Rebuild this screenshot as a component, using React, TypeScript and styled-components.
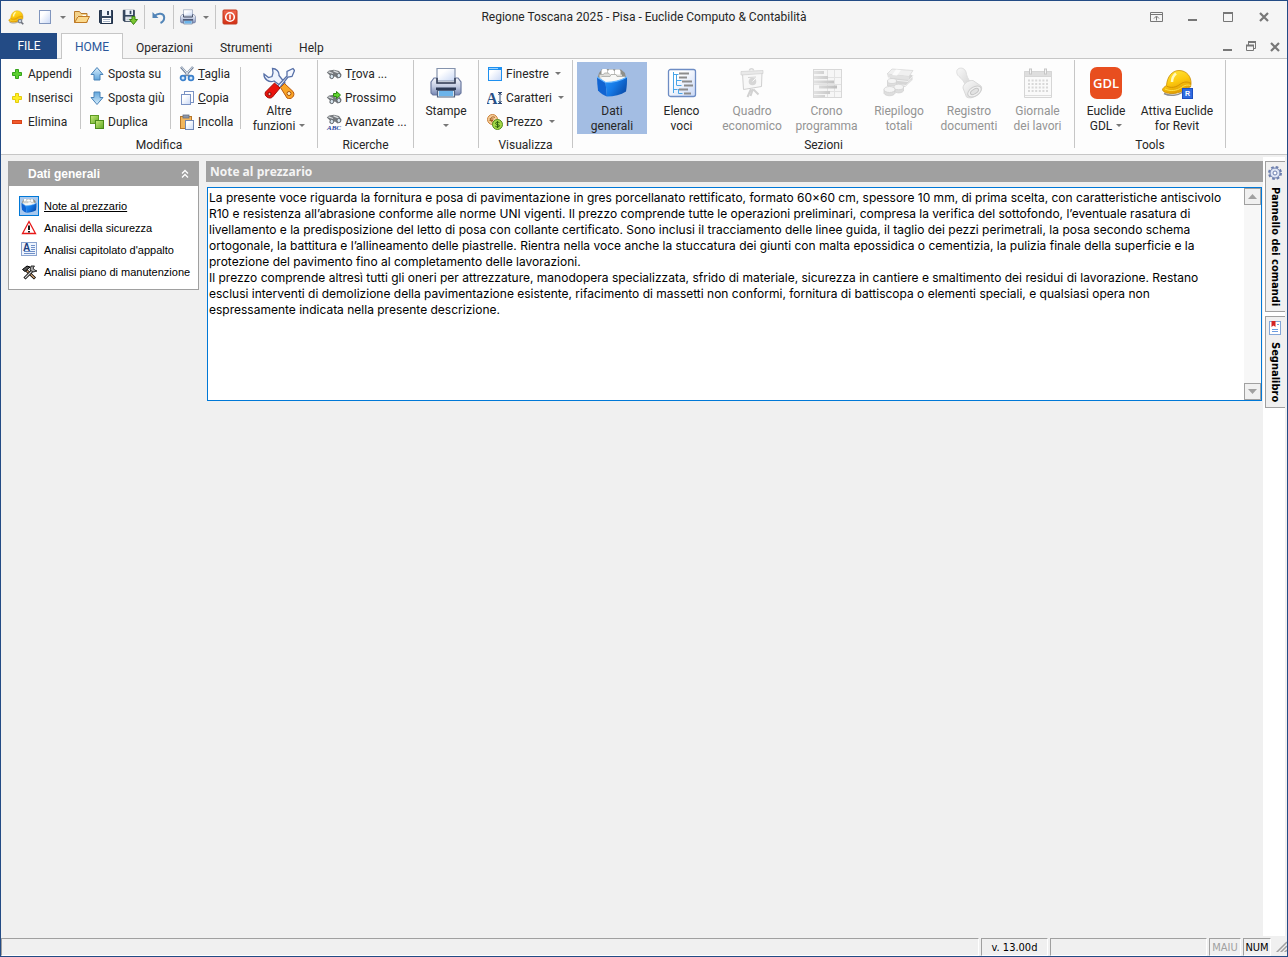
import React, { ReactNode } from 'react';
import styled, { createGlobalStyle, css } from 'styled-components';

const color = {
  navy: '#234b85',
  chrome: '#f5f5f5',
  ribbon: '#fdfdfd',
  line: '#c6c6c6',
  text: '#262626',
  disabled: '#949494',
  panel: '#f0f0f0',
  gray: '#a0a0a0',
  accent: '#0078d7',
  selected: '#a3bde3',
};

const uiFont = 'Roboto, "Open Sans", sans-serif';
const tahoma = '"DejaVu Sans Condensed", "DejaVu Sans", sans-serif';

const GlobalStyle = createGlobalStyle`
  *, *::before, *::after { box-sizing: border-box; }
  body { margin: 0; background: ${color.panel}; }
  svg { display: block; flex: none; }
  button { border: 0; padding: 0; margin: 0; background: none; font: inherit; color: inherit; }
`;

/* ---------- window frame ---------- */

const Window = styled.div`
  min-height: 100vh;
  display: flex;
  flex-direction: column;
  border: 1px solid ${color.navy};
  background: ${color.panel};
  font: 12px/15px ${uiFont};
  color: ${color.text};
`;

const TitleBar = styled.header`
  display: grid;
  grid-template-columns: 1fr auto 1fr;
  align-items: center;
  height: 32px;
  background: ${color.chrome};
`;

const QuickAccess = styled.div`
  display: flex;
  align-items: center;
  padding-left: 7px;
`;

const QuickButton = styled.button<{ $gap?: number }>`
  display: flex;
  align-items: center;
  margin-right: ${(p) => p.$gap ?? 8}px;
`;

const QuickDivider = styled.span`
  width: 1px;
  height: 24px;
  margin-right: 6px;
  background: ${color.line};
`;

const WindowTitle = styled.h1`
  margin: 0;
  font-size: 12px;
  font-weight: 400;
`;

const CaptionButtons = styled.div<{ $small?: boolean }>`
  display: flex;
  justify-content: flex-end;
  margin-left: auto;
  padding-right: ${(p) => (p.$small ? 0 : 5)}px;
  button {
    display: flex;
    align-items: center;
    justify-content: center;
    width: ${(p) => (p.$small ? 24 : 36)}px;
    height: 24px;
  }
`;

const TabRow = styled.nav`
  display: flex;
  align-items: flex-end;
  height: 26px;
  background: ${color.chrome};
  box-shadow: inset 0 -1px ${color.line};
`;

const FileTab = styled.button`
  width: 56px;
  height: 26px;
  margin-right: 4px;
  background: ${color.navy};
  color: #fff;
`;

const Tab = styled.button<{ $active?: boolean }>`
  height: 26px;
  padding: 3px 14px 0 13px;
  border: solid transparent;
  border-width: 1px 0 0;
  ${(p) =>
    p.$active &&
    css`
      width: 62px;
      padding: 2px 0 0;
      border: solid ${color.line};
      border-width: 1px 1px 0;
      background: ${color.ribbon};
      color: #2b579a;
    `}
`;

/* ---------- ribbon ---------- */

const RibbonBar = styled.div`
  display: flex;
  height: 96px;
  background: ${color.ribbon};
  border-bottom: 1px solid ${color.line};
`;

const GroupBox = styled.section`
  display: flex;
  flex-direction: column;
  padding-top: 3px;
`;

const GroupContent = styled.div<{ $pad?: number }>`
  display: flex;
  height: 72px;
  padding: 0 ${(p) => p.$pad ?? 0}px;
`;

const GroupLabel = styled.h2`
  margin: 3px 0 0;
  font-size: 12px;
  font-weight: 400;
  line-height: 16px;
  text-align: center;
`;

const GroupDivider = styled.span`
  width: 1px;
  height: 88px;
  margin-top: 1px;
  background: ${color.line};
`;

const ColumnDivider = styled.span`
  width: 1px;
  margin: 5px 0;
  background: ${color.line};
`;

const Column = styled.div<{ $width: number }>`
  display: flex;
  flex-direction: column;
  width: ${(p) => p.$width}px;
  padding-left: 8px;
`;

const SmallButton = styled.button`
  display: flex;
  align-items: center;
  gap: 3px;
  height: 24px;
  white-space: nowrap;
`;

const IconSlot = styled.span`
  display: flex;
  align-items: center;
  justify-content: center;
  width: 16px;
  height: 16px;
`;

const BigButton = styled.button<{ $width: number; $selected?: boolean }>`
  display: flex;
  flex-direction: column;
  align-items: center;
  gap: 5px;
  width: ${(p) => p.$width}px;
  height: 72px;
  padding-top: 5px;
  white-space: nowrap;
  background: ${(p) => (p.$selected ? color.selected : 'none')};
  &:disabled {
    color: ${color.disabled};
  }
`;

const BigLabel = styled.span`
  text-align: center;
`;

const Arrow = styled.span<{ $gap?: number }>`
  display: inline-block;
  margin-left: ${(p) => p.$gap ?? 4}px;
  vertical-align: 3px;
  border: solid transparent;
  border-width: 3px 3px 0;
  border-top-color: #777;
`;

const ArrowBelow = styled(Arrow)`
  margin: 0 auto;
`;

/* ---------- workspace ---------- */

const Workspace = styled.main`
  flex: 1;
  display: flex;
  align-items: stretch;
  padding: 0 2px 0 7px;
`;

const Sidebar = styled.aside`
  width: 191px;
  margin: 6px 7px 0 0;
  flex: none;
  align-self: flex-start;
  border: 1px solid ${color.gray};
  background: #fff;
`;

const SidebarHeader = styled.header`
  display: flex;
  align-items: center;
  justify-content: space-between;
  height: 24px;
  padding: 0 8px 0 19px;
  background: ${color.gray};
  color: #fff;
  font: bold 12px/16px "Liberation Sans", sans-serif;
`;

const SidebarList = styled.ul`
  margin: 0;
  padding: 9px 0 6px 9px;
  list-style: none;
`;

const SidebarItem = styled.li`
  display: flex;
  align-items: center;
  gap: 4px;
  height: 22px;
`;

const SidebarIcon = styled.span<{ $selected?: boolean }>`
  display: flex;
  align-items: center;
  justify-content: center;
  width: 22px;
  height: 20px;
  ${(p) =>
    p.$selected &&
    css`
      width: 20px;
      margin: 0 1px;
      border: 1px solid ${color.accent};
      background: #a9c9ee;
    `}
`;

const SidebarLink = styled.a<{ $selected?: boolean }>`
  color: #000;
  font: 11px/14px "Liberation Sans", sans-serif;
  white-space: nowrap;
  text-decoration: ${(p) => (p.$selected ? 'underline' : 'none')};
`;

const NotesPane = styled.section`
  flex: 1;
  min-width: 0;
  margin-top: 6px;
`;

const NotesTitle = styled.h2`
  height: 21px;
  margin: 0 0 5px;
  padding-left: 4px;
  background: ${color.gray};
  color: #f4f4f4;
  font: bold 12px/21px "Open Sans", sans-serif;
`;

const NotesBox = styled.div`
  display: flex;
  height: 214px;
  margin: 0 1px;
  border: 1px solid ${color.accent};
  background: #fff;
`;

const NotesText = styled.textarea`
  flex: 1;
  min-width: 0;
  padding: 2px 0 0 1px;
  border: 0;
  outline: 0;
  resize: none;
  overflow: hidden;
  background: #fff;
  color: #000;
  font: 12px/16px Inter, "Noto Sans", sans-serif;
  white-space: pre-wrap;
`;

const ScrollTrack = styled.div`
  display: flex;
  flex-direction: column;
  justify-content: space-between;
  width: 17px;
  background: #f7f7f7;
`;

const ScrollButton = styled.button`
  display: flex;
  align-items: center;
  justify-content: center;
  width: 17px;
  height: 17px;
  border: 1px solid ${color.gray};
  background: ${color.panel};
`;

const DockStrip = styled.div`
  display: flex;
  flex-direction: column;
  gap: 4px;
  width: 22px;
  margin-top: 2px;
  padding: 4px 0 0 2px;
  background: #fff;
`;

const DockTab = styled.button`
  display: flex;
  flex-direction: column;
  align-items: center;
  gap: 6px;
  padding: 3px 2px 5px 0;
  border: solid ${color.gray};
  border-width: 1px 0 1px 1px;
  background: ${color.panel};
  color: #000;
`;

const DockLabel = styled.span`
  font: bold 11px/16px ${tahoma};
  writing-mode: vertical-rl;
`;

/* ---------- status bar ---------- */

const StatusBar = styled.footer`
  display: flex;
  align-items: stretch;
  gap: 2px;
  height: 20px;
  padding: 2px 0 0;
  font: 11px/18px ${tahoma};
  color: #000;
`;

const StatusCell = styled.span<{ $width?: number; $muted?: boolean }>`
  ${(p) => (p.$width ? `width: ${p.$width}px;` : 'flex: 1;')}
  border: 1px solid;
  border-color: ${color.gray} #fff #fff ${color.gray};
  text-align: center;
  white-space: nowrap;
  color: ${(p) => (p.$muted ? color.gray : '#000')};
`;

/* ---------- icons ---------- */

const Gradients = () => (
  <svg width="0" height="0" aria-hidden="true">
    <defs>
      <linearGradient id="yellow" x1="0.2" y1="0" x2="0.6" y2="1">
        <stop offset="0" stopColor="#ffe63c" />
        <stop offset="0.5" stopColor="#fdc90f" />
        <stop offset="1" stopColor="#dd9800" />
      </linearGradient>
      <linearGradient id="blueArrow" x1="0" y1="0" x2="0" y2="1">
        <stop offset="0" stopColor="#d8eefc" />
        <stop offset="1" stopColor="#5fa5dc" />
      </linearGradient>
      <linearGradient id="page" x1="0" y1="0" x2="1" y2="1">
        <stop offset="0.3" stopColor="#fff" />
        <stop offset="1" stopColor="#c9d8f5" />
      </linearGradient>
      <linearGradient id="green" x1="0" y1="0" x2="1" y2="1">
        <stop offset="0" stopColor="#c9ea7c" />
        <stop offset="1" stopColor="#5fa822" />
      </linearGradient>
      <linearGradient id="blueBox" x1="0" y1="0" x2="1" y2="0.6">
        <stop offset="0" stopColor="#2b96f8" />
        <stop offset="0.5" stopColor="#1579e6" />
        <stop offset="1" stopColor="#0a4fae" />
      </linearGradient>
      <linearGradient id="printer" x1="0" y1="0" x2="0" y2="1">
        <stop offset="0" stopColor="#f4f6fb" />
        <stop offset="0.5" stopColor="#c3cce2" />
        <stop offset="1" stopColor="#7586b3" />
      </linearGradient>
      <linearGradient id="paleGray" x1="0" y1="0" x2="1" y2="1">
        <stop offset="0" stopColor="#f9f9f9" />
        <stop offset="1" stopColor="#d4d4d4" />
      </linearGradient>
      <linearGradient id="bar" x1="0" y1="0" x2="1" y2="0">
        <stop offset="0" stopColor="#e2e2e2" />
        <stop offset="1" stopColor="#bdbdbd" />
      </linearGradient>
      <linearGradient id="red" x1="0" y1="0" x2="0" y2="1">
        <stop offset="0" stopColor="#f0674e" />
        <stop offset="1" stopColor="#d32f12" />
      </linearGradient>
    </defs>
  </svg>
);

type SvgProps = { size?: number; box?: string; children: ReactNode };
const Svg = ({ size = 16, box, children }: SvgProps) => (
  <svg width={size} height={size} viewBox={box ?? `0 0 ${size} ${size}`} fill="none" aria-hidden="true">
    {children}
  </svg>
);

const HelmetShape = () => (
  <>
    <path d="M3 26.500c6 3 14 2 19-1.500l7-4" stroke="#8f8f8f" strokeWidth="1.500" />
    <path d="M1.500 23C1.500 21 4 19.500 5.500 18.500C6 10 11 3.500 18 3.500C26 3.500 30.500 10 30 17L29.500 20C28 20 25 21 22 23.500C16 28 3 27.500 1.500 23Z" fill="url(#yellow)" stroke="#c98d05" strokeWidth=".8" />
    <path d="M5.500 19C10 21.500 15 20.500 19.500 17C23 14.500 27 14.500 30 16.500" stroke="#d39300" strokeWidth="1" />
    <path d="M4 22C9 24.500 15.500 24 20.500 20.500C23.500 18 27 17.500 29.500 18.500" stroke="#ffe04a" strokeWidth="1" />
    <path d="M15 6.500C12 9 11 12 11 15" stroke="#fffac0" strokeWidth="2.500" />
  </>
);

const AppIcon = () => (
  <Svg box="0 0 32 32">
    <HelmetShape />
    <circle cx="24" cy="24" r="3.500" fill="#d4dbe6" stroke="#7d8795" strokeWidth="2.500" />
    <path d="M26.500 26.500l4 4" stroke="#6b6f78" strokeWidth="3.500" />
  </Svg>
);

const NewIcon = () => (
  <Svg>
    <rect x="2.500" y="1.500" width="11" height="13" fill="url(#page)" stroke="#8095bd" />
  </Svg>
);

const OpenIcon = () => (
  <Svg>
    <path d="M.5 13.500v-11h5l1.500 2h6v9z" fill="#f3d28a" stroke="#b8792a" />
    <path d="M3 7h5l1-1h3v2H3z" fill="#fff" />
    <path d="M.7 13.500L4 7.500h11.500l-3 6z" fill="#fbd98c" stroke="#c07a24" />
  </Svg>
);

const DiskShape = () => (
  <>
    <path d="M1.500 1.500h13v13h-12l-1-1z" fill="#33465f" stroke="#22324a" />
    <rect x="4" y="1" width="9" height="6" fill="#eef3fa" />
    <rect x="9" y="2" width="2" height="4" fill="#33465f" />
    <rect x="4" y="9" width="9" height="5" fill="#fff" />
    <path d="M5 10.500h7M5 12.500h7" stroke="#a9b6c9" />
  </>
);

const SaveIcon = () => (
  <Svg>
    <DiskShape />
  </Svg>
);

const SaveAsIcon = () => (
  <Svg>
    <g transform="scale(.85)">
      <DiskShape />
    </g>
    <path d="M10 7.500h3v3h2.500L11.500 15.500 7.500 10.500H10z" fill="#7cc733" stroke="#3b8512" />
  </Svg>
);

const UndoIcon = () => (
  <Svg>
    <path d="M3.500 7C7 3.500 13 4 13.200 8.500c0 2.500-1.500 4.500-3.700 5.500" stroke="#5285b8" strokeWidth="2" />
    <path d="M1.500 3v6h6z" fill="#5285b8" />
  </Svg>
);

const PrintIcon = ({ size = 16 }: { size?: number }) => (
  <Svg size={size} box="0 0 32 32">
    <path d="M7 1.500h18V14H7z" fill="url(#page)" stroke="#8593ad" strokeWidth="1.200" />
    <path d="M1 15l3-4h3v5h18v-5h3l3 4v11l-2 2H3l-2-2z" fill="url(#printer)" stroke="#6c7aa0" strokeWidth="1.200" />
    <path d="M7 11v5h18v-5" stroke="#3a4358" strokeWidth="1.500" />
    <path d="M6 20.500h20V23H6z" fill="#2d3a55" />
    <path d="M7.500 23.500h17v6.500h-17z" fill="#dfeefa" stroke="#51627f" strokeWidth="1.200" />
    <path d="M9 24h14v5H9z" fill="#6cb4ea" />
  </Svg>
);

const PowerIcon = () => (
  <Svg>
    <rect x="1" y="1" width="14" height="14" rx="1" fill="url(#red)" stroke="#c23a20" />
    <circle cx="8" cy="8" r="4.300" stroke="#fff" strokeWidth="1.600" />
    <path d="M8 5.500v5" stroke="#fff" strokeWidth="1.600" />
  </Svg>
);

const PlusIcon = ({ fill, edge }: { fill: string; edge: string }) => (
  <Svg>
    <path d="M6.500 3.500h3v3h3v3h-3v3h-3v-3h-3v-3h3z" fill={fill} stroke={edge} />
  </Svg>
);

const MinusIcon = () => (
  <Svg>
    <rect x="3.500" y="6.500" width="9" height="3" fill="#f15a2c" stroke="#d84419" />
  </Svg>
);

const ArrowIcon = ({ down }: { down?: boolean }) => (
  <Svg>
    <path
      d="M8 1.500l6 7h-3v5.500H5V8.500H2z"
      fill="url(#blueArrow)"
      stroke="#4a83b8"
      transform={down ? 'rotate(180 8 8)' : undefined}
    />
  </Svg>
);

const DuplicateIcon = () => (
  <Svg>
    <rect x="1.500" y="1.500" width="8" height="8" fill="url(#green)" stroke="#5d9a22" />
    <rect x="6.500" y="6.500" width="8" height="8" fill="url(#green)" stroke="#4b8a1a" />
  </Svg>
);

const CutIcon = () => (
  <Svg>
    <path d="M2 1l8 9M14 1L6 10" stroke="#75859c" strokeWidth="2.600" />
    <path d="M2.500 1l7 8M13.500 1l-7 8" stroke="#e3eaf4" strokeWidth="1" />
    <circle cx="4" cy="12" r="2.400" fill="#d6e9fb" stroke="#3a80cc" strokeWidth="1.800" />
    <circle cx="12" cy="12" r="2.400" fill="#d6e9fb" stroke="#3a80cc" strokeWidth="1.800" />
  </Svg>
);

const CopyIcon = () => (
  <Svg>
    <rect x="5.500" y="1.500" width="9" height="11" fill="#fff" stroke="#7b93c4" />
    <rect x="2.500" y="4.500" width="9" height="10" fill="url(#page)" stroke="#7b93c4" />
  </Svg>
);

const PasteIcon = () => (
  <Svg>
    <rect x="1.500" y="2.500" width="11" height="12" fill="#f2b65c" stroke="#b8772a" />
    <rect x="4" y="1" width="6" height="3" fill="#8d97a8" stroke="#666f80" strokeWidth=".8" />
    <rect x="6.500" y="6.500" width="8" height="9" fill="url(#page)" stroke="#6f86b5" />
  </Svg>
);

const ToolsIcon = () => (
  <Svg size={32}>
    <path d="M9.500 1.500C13 1.500 16.500 4.500 16 8.500L22 16l-3.500 3.500L11 14C6 16 .5 12 1 7L5.500 10.500 9 9.500 10 6z" fill="#eef3fd" stroke="#5871a8" strokeWidth="1.300" />
    <path d="M14 19.500L24 9V4.500l6-3 1.500 2-2.500 6-4 .5L16.500 21z" fill="#f5f8ff" stroke="#5871a8" strokeWidth="1.300" />
    <path d="M11.500 16l5.500 5-7.500 9c-3 3-9-1-7-5z" fill="#ea130c" stroke="#a30c06" />
    <path d="M17.500 20.500l4-4 8.500 8c3 4-2 9-6 6.500z" fill="#f9a526" stroke="#b9580e" />
    <circle cx="6.500" cy="27" r="1.600" fill="#f7b4ae" stroke="#7c0c06" />
    <circle cx="26" cy="26.500" r="2" fill="#fff2d0" stroke="#a5500c" />
  </Svg>
);

const BinocularShape = () => (
  <>
    <path d="M.8 6.500L3 4.500l5-.8 5 1.300 2.500 3.500-.5 2.500-3.500 1.500-2.500-2-1.500.5L6.500 13 3.500 12 4 9.500z" fill="#75797d" />
    <path d="M2.500 5.800l4.500 1.700M7.500 4.800l5 2" stroke="#d9dcde" strokeWidth="1.300" />
    <ellipse cx="5.800" cy="10.500" rx="1.800" ry="2.200" fill="#d5e4ee" stroke="#55595e" strokeWidth=".8" />
    <ellipse cx="12.800" cy="9.500" rx="1.800" ry="2.200" fill="#d5e4ee" stroke="#55595e" strokeWidth=".8" />
  </>
);

const FindIcon = () => (
  <Svg>
    <BinocularShape />
  </Svg>
);

const FindNextIcon = () => (
  <Svg>
    <g transform="translate(0 1)">
      <BinocularShape />
    </g>
    <path d="M7.500 3.500h3V1.500l4 3.500-4 3.500V6.500h-3z" fill="#5fd42d" stroke="#2e8a12" />
  </Svg>
);

const FindAdvancedIcon = () => (
  <Svg>
    <g transform="translate(0 -3)">
      <BinocularShape />
    </g>
    <text x="8" y="15.500" textAnchor="middle" fontFamily="Liberation Serif, serif" fontSize="7" fontStyle="italic" fontWeight="bold" fill="#2847a0">
      ABC
    </text>
  </Svg>
);

const WindowIcon = () => (
  <Svg>
    <rect x="1.500" y="1.500" width="13" height="13" fill="url(#page)" stroke="#1e90f0" />
    <path d="M1 1h14v3H1z" fill="#1e90f0" />
    <path d="M2 2.500h9" stroke="#9bd2fc" />
  </Svg>
);

const FontIcon = () => (
  <Svg>
    <text x="-1" y="14" fontFamily="Liberation Serif, serif" fontSize="16" fontWeight="bold" fill="#274f86">
      A
    </text>
    <path d="M11 2.500h4M11 13.500h4M13 3v10M11.500 5L13 3l1.500 2M11.500 11l1.500 2 1.500-2" stroke="#2f4a74" />
  </Svg>
);

const PriceIcon = () => (
  <Svg>
    <circle cx="5.500" cy="5.500" r="5" fill="#f7cf9b" stroke="#c9803a" />
    <path d="M8 3.500C5.500 2 3.500 3.500 3.500 5.500S5.500 9 8 7.500M2.500 5h4M2.500 6.500h3.500" stroke="#a35c1d" />
    <circle cx="10.500" cy="10.500" r="5" fill="#a4d848" stroke="#558b1c" />
    <path d="M12.500 8.700c-1.500-1-4-.6-4 .7 0 1.600 4 .8 4 2.400 0 1.300-2.800 1.500-4.200.4M10.500 7v7" stroke="#2f6310" />
  </Svg>
);

const FoldersIcon = ({ size = 32 }: { size?: number }) => (
  <Svg size={size} box="0 0 32 32">
    <path d="M1.500 11L3 6l3-4 19 .5 4 3.500 1 5-20 5z" fill="#8e8f8a" />
    <path d="M5.500 9V3.500L6.500 2h4l1 1.500V9zM12 9V4l1-1.500h4L18 4v5zM18.500 9V4l1-1.500h4l1 1.500v5z" fill="#fff" />
    <path d="M3.500 13V7.500h4l1-1.500h4l1 1.500h12.500V13z" fill="#dcdcd8" />
    <path d="M5.500 15V9.500H14l1-2h5l1 2h8V13l-17 4z" fill="#f8f8f6" />
    <path d="M3.500 7.500h4l1-1.500h4l1 1.500M5.500 9.500H14l1-2h5l1 2h8" stroke="#a7a8a4" strokeWidth=".8" />
    <path d="M1 10l8.500 5.500 1.500 14c-3-1-6.500-3-9-6C1.500 19 1 14.500 1 10z" fill="#1164d2" />
    <path d="M9.500 15.500C17 15.500 25 13.500 31 10c.2 5-.2 10-1 14.500-5 3.200-12 5-19 5z" fill="url(#blueBox)" />
    <path d="M1 10l8.500 5.500C17 15.500 25 13.500 31 10" stroke="#62b4ff" strokeWidth="1.200" />
  </Svg>
);

const ListIcon = () => (
  <Svg size={32}>
    <rect x="2.500" y="2.500" width="27" height="27" rx="2" fill="url(#page)" stroke="#6d8cc4" strokeWidth="1.300" />
    <path d="M7.500 5v21M7.500 7.500h5M10.500 8v10M10.500 13.500h5M10.500 18.500h5M7.500 22.500h4M12.500 22v4.500h4" stroke="#49a5e8" />
    <path d="M13 6.500h10M13 10.500h8M16 14.500h10M18 18.500h9M13 22.500h9M18 26.500h7" stroke="#8c8c8c" strokeWidth="2" />
  </Svg>
);

const BoardIcon = () => (
  <Svg size={32}>
    <path d="M13.500 3.500c0-2.500 4-2.500 4 0" stroke="#d8d8d8" strokeWidth="1.500" />
    <path d="M6.500 6.500L26 5l-.5 14.500-18 3z" fill="#f8f8f8" stroke="#d0d0d0" />
    <path d="M5 4.500L27 3.500v3L5 8z" fill="#e9e9e9" stroke="#d0d0d0" strokeWidth=".7" />
    <path d="M12 10.500l8-.5" stroke="#d4d4d4" />
    <circle cx="16.500" cy="14.500" r="3.800" fill="#d6d6d6" />
    <path d="M16.500 14.500l3-3" stroke="#f8f8f8" />
    <path d="M15 22l-3.500 8M17 22l-2.500 7M17.500 22.500l5 5" stroke="#d2d2d2" strokeWidth="2" />
  </Svg>
);

const GanttIcon = () => (
  <Svg size={32}>
    <rect x="2.500" y="2.500" width="28" height="28" fill="#f6f6f6" stroke="#d8d8d8" />
    <path d="M16.500 3v27M23.500 3v27M3 10.500h27M3 17.500h27M3 24.500h27" stroke="#e2e2e2" />
    <path d="M3 4h10v3H3zM3 9h14v3H3zM3 13.500h20v3H3zM8 18.500h18v3H8zM3 24h16v3H3zM3 28h11v2H3z" fill="url(#bar)" />
  </Svg>
);

const MoneyIcon = () => (
  <Svg size={32}>
    <path d="M7 5l22.500 3v5L22 20l-11-3-4-6z" fill="#d6d6d6" />
    <path d="M4 7l5-5 21 1.500-4 6z" fill="#f0f0f0" stroke="#d8d8d8" strokeWidth=".8" />
    <path d="M4 7l22 2.500V13L5 10.500z" fill="#e2e2e2" />
    <path d="M13 2.500l5 .5-4 5.500-5-.5z" fill="#fbfbfb" />
    <path d="M11 13l14 1.500 5.500-6M12 17l11 1.500 6-6" stroke="#f2f2f2" />
    <path d="M4.500 14v5h9v-5M1 22.500v4c2 3 9 3 11 0v-4M11 20v4c2 2.500 7.500 2.500 9.500 0v-4" fill="#dedede" stroke="#d2d2d2" strokeWidth=".8" />
    <ellipse cx="9" cy="14" rx="4.500" ry="2.500" fill="#f4f4f4" stroke="#d2d2d2" strokeWidth=".8" />
    <ellipse cx="15.700" cy="20" rx="4.800" ry="2.700" fill="#f4f4f4" stroke="#d2d2d2" strokeWidth=".8" />
    <ellipse cx="6.500" cy="22.500" rx="5.500" ry="3" fill="#f4f4f4" stroke="#d2d2d2" strokeWidth=".8" />
  </Svg>
);

const StampIcon = () => (
  <Svg size={32}>
    <path d="M5 2c3-2 7-.5 8 3 .7 3.500 1.500 7 5 10l-5.500 4C11.500 15 9 12 6 9.500 3.500 7.500 3 3.500 5 2z" fill="url(#paleGray)" stroke="#dedede" />
    <path d="M10 21c0-4 5-8 10-7.500l8 5.500c2 3-1 7.500-5 10-3.500 2-7 2.500-9.500 1z" fill="url(#paleGray)" stroke="#dadada" />
    <ellipse cx="21.500" cy="24.500" rx="7.500" ry="4.500" transform="rotate(-32 21.500 24.500)" fill="#f0f0f0" stroke="#cccccc" />
    <ellipse cx="21.500" cy="24.500" rx="4.500" ry="2.200" transform="rotate(-32 21.500 24.500)" fill="#e2e2e2" stroke="#c4c4c4" />
  </Svg>
);

const CalendarIcon = () => (
  <Svg size={32}>
    <path d="M2.500 4.500h27v26h-27z" fill="#fafafa" stroke="#d6d6d6" />
    <path d="M2.500 4.500h27v5h-27z" fill="#dedede" stroke="#d6d6d6" />
    <path d="M3 28.500h26" stroke="#dedede" />
    <path d="M8.500 1.500v6M23.500 1.500v6" stroke="#c6c6c6" strokeWidth="3" />
    <path d="M8.500 2.500v4M23.500 2.500v4" stroke="#f4f4f4" />
    <path d="M6 13.500h20M6 17h20M6 20.500h20M6 24h20" stroke="#d8d8d8" strokeWidth="2" strokeDasharray="2 1.600" />
  </Svg>
);

const GdlIcon = () => (
  <Svg size={32}>
    <rect width="32" height="32" rx="7" fill="#e84e1f" />
    <text x="16" y="21" textAnchor="middle" fontFamily="Open Sans, sans-serif" fontSize="13" fontWeight="600" fill="#fff">
      GDL
    </text>
  </Svg>
);

const RevitIcon = () => (
  <Svg size={32}>
    <HelmetShape />
    <rect x="21.500" y="21.500" width="10" height="10" fill="#2f6be0" stroke="#1c4fc0" />
    <text x="26.500" y="29" textAnchor="middle" fontFamily="Liberation Sans, sans-serif" fontSize="7" fontWeight="bold" fill="#fff">
      R
    </text>
  </Svg>
);

const WarningIcon = () => (
  <Svg>
    <path d="M8 1.500L14.500 13.500h-13z" fill="#fff" stroke="#e81818" strokeWidth="1.300" />
    <path d="M8 5.500v4.500M8 11v1.500" stroke="#000" strokeWidth="1.800" />
  </Svg>
);

const SpecIcon = () => (
  <Svg>
    <rect x=".5" y=".5" width="15" height="13" fill="#eef4fd" stroke="#8aa3cf" />
    <path d="M10 3.500h4M10 5.500h4M10 7.500h4M3 9.500h11M3 11.500h11" stroke="#6f8fc8" />
    <text x="2" y="8.500" fontFamily="Liberation Sans, sans-serif" fontSize="10" fontWeight="bold" fill="#1d3f80">
      A
    </text>
  </Svg>
);

const HammerIcon = () => (
  <Svg>
    <path d="M5 6l9 8.500" stroke="#000" strokeWidth="3" />
    <path d="M5.500 6.500l8 7.500" stroke="#d8a878" strokeWidth="1.200" />
    <path d="M12 6l-8.500 8.500" stroke="#000" strokeWidth="3" />
    <path d="M11.500 6.500L4 14" stroke="#d4d4d4" strokeWidth="1.200" />
    <path d="M1.500 5.500L6 2l3 1-5 4.500z" fill="#555" stroke="#000" />
    <path d="M10 2l-1 4 3 2 4-1-2.500-1L12 4l1.500-2z" fill="#aaa" stroke="#000" strokeWidth=".8" />
  </Svg>
);

const GearIcon = () => (
  <Svg>
    <circle cx="8" cy="8" r="6" stroke="#6d7fae" strokeWidth="2" strokeDasharray="2.700 2.012" />
    <circle cx="8" cy="8" r="5" fill="#dfe6f5" stroke="#6d7fae" />
    <circle cx="8" cy="8" r="2" fill="#fff" stroke="#6d7fae" />
  </Svg>
);

const BookmarkIcon = () => (
  <Svg>
    <rect x="2.500" y="1.500" width="11" height="13" fill="#fff" stroke="#84a7d8" />
    <path d="M4.500 1v6l2-1.500 2 1.500V1z" fill="#d42424" />
    <path d="M10 4.500h2M5 9.500h6M5 11.500h6" stroke="#6b9be0" />
  </Svg>
);

const RibbonToggleIcon = () => (
  <Svg>
    <path d="M2.500 3.500h12v9h-12zM2.500 5.500h12M8.500 11.500V7.500M6 9.500l2.500-2.500 2.500 2.500" stroke="#777" />
  </Svg>
);
const MinimizeIcon = () => (
  <Svg>
    <path d="M4 11h9" stroke="#777" strokeWidth="2" />
  </Svg>
);
const MaximizeIcon = () => (
  <Svg>
    <path d="M3.500 3.500h9v9h-9z" stroke="#777" />
    <path d="M3 4h10" stroke="#777" strokeWidth="2" />
  </Svg>
);
const RestoreIcon = () => (
  <Svg>
    <path d="M5.500 6V3.500h7v6H10" stroke="#777" />
    <path d="M5 3h8M3 6.500h8" stroke="#777" strokeWidth="2" />
    <path d="M3.500 6.500h7v5h-7z" stroke="#777" />
  </Svg>
);
const CloseIcon = () => (
  <Svg>
    <path d="M4 4l8 8M12 4l-8 8" stroke="#777" strokeWidth="2.200" />
  </Svg>
);
const CollapseIcon = () => (
  <Svg size={10}>
    <path d="M2 4.500l3-3 3 3M2 8.500l3-3 3 3" stroke="#fff" strokeWidth="1.300" />
  </Svg>
);
const ScrollArrow = ({ down }: { down?: boolean }) => (
  <Svg size={9}>
    <path d={down ? 'M0 2h9L4.500 7z' : 'M0 7h9L4.500 2z'} fill="#a0a0a0" />
  </Svg>
);
const SizeGrip = () => (
  <Svg size={14}>
    <path d="M2 16L14 4M6 16l8-8M10 16l4-4" stroke="#a0a0a0" strokeWidth="1.500" />
  </Svg>
);

/* ---------- composed parts ---------- */

type GroupProps = { label?: string; pad?: number; children: ReactNode };
const Group = ({ label, pad, children }: GroupProps) => (
  <>
    <GroupBox>
      <GroupContent $pad={pad}>{children}</GroupContent>
      {label && <GroupLabel>{label}</GroupLabel>}
    </GroupBox>
    <GroupDivider />
  </>
);

type SmallProps = { icon: ReactNode; menu?: boolean; children: ReactNode };
const Small = ({ icon, menu, children }: SmallProps) => (
  <SmallButton>
    <IconSlot>{icon}</IconSlot>
    <span>
      {children}
      {menu && <Arrow $gap={6} />}
    </span>
  </SmallButton>
);

type BigProps = { icon: ReactNode; width: number; selected?: boolean; disabled?: boolean; children: ReactNode };
const Big = ({ icon, width, selected, disabled, children }: BigProps) => (
  <BigButton $width={width} $selected={selected} disabled={disabled}>
    {icon}
    <BigLabel>{children}</BigLabel>
  </BigButton>
);

const notes = `La presente voce riguarda la fornitura e posa di pavimentazione in gres porcellanato rettificato, formato 60×60 cm, spessore 10 mm, di prima scelta, con caratteristiche antiscivolo
R10 e resistenza all’abrasione conforme alle norme UNI vigenti. Il prezzo comprende tutte le operazioni preliminari, compresa la verifica del sottofondo, l’eventuale rasatura di
livellamento e la predisposizione del letto di posa con collante certificato. Sono inclusi il tracciamento delle linee guida, il taglio dei pezzi perimetrali, la posa secondo schema
ortogonale, la battitura e l’allineamento delle piastrelle. Rientra nella voce anche la stuccatura dei giunti con malta epossidica o cementizia, la pulizia finale della superficie e la
protezione del pavimento fino al completamento delle lavorazioni.
Il prezzo comprende altresì tutti gli oneri per attrezzature, manodopera specializzata, sfrido di materiale, sicurezza in cantiere e smaltimento dei residui di lavorazione. Restano
esclusi interventi di demolizione della pavimentazione esistente, rifacimento di massetti non conformi, fornitura di battiscopa o elementi speciali, e qualsiasi opera non
espressamente indicata nella presente descrizione.`;

const sections = [
  { name: 'Analisi della sicurezza', icon: <WarningIcon /> },
  { name: "Analisi capitolato d'appalto", icon: <SpecIcon /> },
  { name: 'Analisi piano di manutenzione', icon: <HammerIcon /> },
];

export default function App() {
  return (
    <Window>
      <GlobalStyle />
      <Gradients />
      <TitleBar>
        <QuickAccess>
          <QuickButton $gap={13} aria-label="Euclide"><AppIcon /></QuickButton>
          <QuickButton $gap={3} aria-label="Nuovo"><NewIcon /></QuickButton>
          <QuickButton aria-label="Altri modelli"><Arrow /></QuickButton>
          <QuickButton aria-label="Apri"><OpenIcon /></QuickButton>
          <QuickButton aria-label="Salva"><SaveIcon /></QuickButton>
          <QuickButton $gap={6} aria-label="Salva con nome"><SaveAsIcon /></QuickButton>
          <QuickDivider />
          <QuickButton $gap={6} aria-label="Annulla"><UndoIcon /></QuickButton>
          <QuickDivider />
          <QuickButton $gap={3} aria-label="Stampa"><PrintIcon /></QuickButton>
          <QuickButton $gap={6} aria-label="Opzioni di stampa"><Arrow /></QuickButton>
          <QuickDivider />
          <QuickButton aria-label="Esci"><PowerIcon /></QuickButton>
        </QuickAccess>
        <WindowTitle>Regione Toscana 2025 - Pisa - Euclide Computo &amp; Contabilità</WindowTitle>
        <CaptionButtons>
          <button aria-label="Riduci barra multifunzione"><RibbonToggleIcon /></button>
          <button aria-label="Riduci a icona"><MinimizeIcon /></button>
          <button aria-label="Ingrandisci"><MaximizeIcon /></button>
          <button aria-label="Chiudi"><CloseIcon /></button>
        </CaptionButtons>
      </TitleBar>

      <TabRow>
        <FileTab>FILE</FileTab>
        <Tab $active>HOME</Tab>
        <Tab>Operazioni</Tab>
        <Tab>Strumenti</Tab>
        <Tab>Help</Tab>
        <CaptionButtons $small>
          <button aria-label="Riduci documento"><MinimizeIcon /></button>
          <button aria-label="Ripristina documento"><RestoreIcon /></button>
          <button aria-label="Chiudi documento"><CloseIcon /></button>
        </CaptionButtons>
      </TabRow>

      <RibbonBar>
        <Group label="Modifica">
          <Column $width={79}>
            <Small icon={<PlusIcon fill="#5cd030" edge="#35a31a" />}>Appendi</Small>
            <Small icon={<PlusIcon fill="#ffee22" edge="#e3cb10" />}>Inserisci</Small>
            <Small icon={<MinusIcon />}>Elimina</Small>
          </Column>
          <ColumnDivider />
          <Column $width={89}>
            <Small icon={<ArrowIcon />}>Sposta su</Small>
            <Small icon={<ArrowIcon down />}>Sposta giù</Small>
            <Small icon={<DuplicateIcon />}>Duplica</Small>
          </Column>
          <ColumnDivider />
          <Column $width={69}>
            <Small icon={<CutIcon />}><u>T</u>aglia</Small>
            <Small icon={<CopyIcon />}><u>C</u>opia</Small>
            <Small icon={<PasteIcon />}><u>I</u>ncolla</Small>
          </Column>
          <ColumnDivider />
          <Big width={76} icon={<ToolsIcon />}>Altre<br />funzioni<Arrow /></Big>
        </Group>

        <Group label="Ricerche">
          <Column $width={95}>
            <Small icon={<FindIcon />}>T<u>r</u>ova ...</Small>
            <Small icon={<FindNextIcon />}>Prossimo</Small>
            <Small icon={<FindAdvancedIcon />}>Avanzate ...</Small>
          </Column>
        </Group>

        <Group>
          <Big width={64} icon={<PrintIcon size={32} />}>Stampe<br /><ArrowBelow /></Big>
        </Group>

        <Group label="Visualizza">
          <Column $width={93}>
            <Small icon={<WindowIcon />} menu>Finestre</Small>
            <Small icon={<FontIcon />} menu>Caratteri</Small>
            <Small icon={<PriceIcon />} menu>Prezzo</Small>
          </Column>
        </Group>

        <Group label="Sezioni" pad={4}>
          <Big width={70} icon={<FoldersIcon />} selected>Dati<br />generali</Big>
          <Big width={69} icon={<ListIcon />}>Elenco<br />voci</Big>
          <Big width={72} icon={<BoardIcon />} disabled>Quadro<br />economico</Big>
          <Big width={77} icon={<GanttIcon />} disabled>Crono<br />programma</Big>
          <Big width={68} icon={<MoneyIcon />} disabled>Riepilogo<br />totali</Big>
          <Big width={72} icon={<StampIcon />} disabled>Registro<br />documenti</Big>
          <Big width={65} icon={<CalendarIcon />} disabled>Giornale<br />dei lavori</Big>
        </Group>

        <Group label="Tools" pad={4}>
          <Big width={54} icon={<GdlIcon />}>Euclide<br />GDL<Arrow /></Big>
          <Big width={88} icon={<RevitIcon />}>Attiva Euclide<br />for Revit</Big>
        </Group>
      </RibbonBar>

      <Workspace>
        <Sidebar>
          <SidebarHeader>
            Dati generali
            <button aria-label="Comprimi"><CollapseIcon /></button>
          </SidebarHeader>
          <SidebarList>
            <SidebarItem>
              <SidebarIcon $selected><FoldersIcon size={16} /></SidebarIcon>
              <SidebarLink href="#note" $selected>Note al prezzario</SidebarLink>
            </SidebarItem>
            {sections.map((s) => (
              <SidebarItem key={s.name}>
                <SidebarIcon>{s.icon}</SidebarIcon>
                <SidebarLink href="#sezione">{s.name}</SidebarLink>
              </SidebarItem>
            ))}
          </SidebarList>
        </Sidebar>

        <NotesPane>
          <NotesTitle id="notes-title">Note al prezzario</NotesTitle>
          <NotesBox>
            <NotesText aria-labelledby="notes-title" defaultValue={notes} spellCheck={false} />
            <ScrollTrack>
              <ScrollButton aria-label="Scorri su"><ScrollArrow /></ScrollButton>
              <ScrollButton aria-label="Scorri giù"><ScrollArrow down /></ScrollButton>
            </ScrollTrack>
          </NotesBox>
        </NotesPane>

        <DockStrip>
          <DockTab><GearIcon /><DockLabel>Pannello dei comandi</DockLabel></DockTab>
          <DockTab><BookmarkIcon /><DockLabel>Segnalibro</DockLabel></DockTab>
        </DockStrip>
      </Workspace>

      <StatusBar>
        <StatusCell />
        <StatusCell $width={67}>v. 13.00d</StatusCell>
        <StatusCell $width={157} />
        <StatusCell $width={32} $muted>MAIU</StatusCell>
        <StatusCell $width={28}>NUM</StatusCell>
        <SizeGrip />
      </StatusBar>
    </Window>
  );
}
